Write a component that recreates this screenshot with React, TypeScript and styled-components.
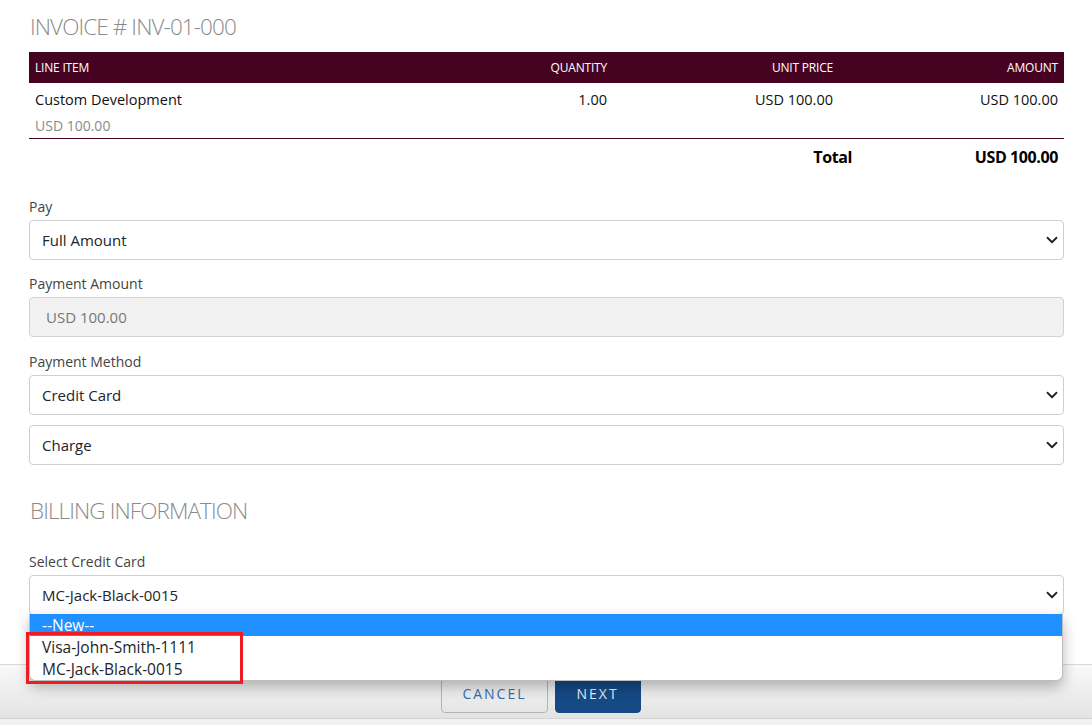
import React from "react";
import styled, { createGlobalStyle } from "styled-components";

const Global = createGlobalStyle`
  html, body { margin: 0; padding: 0; background: #fff; }
  body { font-family: "Open Sans", "Noto Sans", sans-serif; color: #212529; }
  * { box-sizing: border-box; }
`;

const Page = styled.div`
  width: 1092px;
  height: 725px;
  overflow: hidden;
  display: flex;
  flex-direction: column;
  background: #fff;
`;

const Content = styled.div`
  padding: 11px 28px 0 29px;
  display: flex;
  flex-direction: column;
`;

const SectionTitle = styled.h2<{ $top?: number }>`
  margin: ${(p) => p.$top ?? 0}px 0 0 1px;
  font-size: 22.5px;
  font-weight: 300;
  color: #8a8a8a;
  line-height: 32px;
  letter-spacing: -0.9px;
`;

const TableHead = styled.div`
  margin-top: 9px;
  display: grid;
  grid-template-columns: 1fr 226px 226px 225px;
  height: 31px;
  align-items: center;
  background: #450321;
  color: #fff;
  font-size: 12px;
  text-transform: uppercase;
  letter-spacing: -0.2px;
`;

const Cell = styled.div<{ $right?: boolean; $bold?: boolean }>`
  padding: 0 6px;
  text-align: ${(p) => (p.$right ? "right" : "left")};
  font-weight: ${(p) => (p.$bold ? 700 : 400)};
`;

const ItemRow = styled.div`
  display: grid;
  grid-template-columns: 1fr 226px 226px 225px;
  padding-top: 6px;
  height: 56px;
  border-bottom: 1px solid #450321;
  font-size: 14.5px;
  line-height: 22px;
  color: #111;
`;

const ItemName = styled.div`
  display: flex;
  flex-direction: column;
  gap: 4px;
`;

const SubText = styled.span`
  color: #8a8a8a;
  font-size: 14px;
  padding-left: 6px;
`;

const TotalRow = styled.div`
  display: grid;
  grid-template-columns: 1fr 206px;
  padding-top: 7px;
  font-size: 16px;
  color: #000;
  line-height: 22px;
  letter-spacing: -0.4px;
`;

const Group = styled.div<{ $top: number }>`
  margin-top: ${(p) => p.$top}px;
  display: flex;
  flex-direction: column;
`;

const Label = styled.label`
  font-size: 14px;
  line-height: 20px;
  color: #444;
  margin-bottom: 3px;
`;

const FieldWrap = styled.div`
  position: relative;
`;

const SelectBox = styled.div<{ $top?: number }>`
  margin-top: ${(p) => p.$top ?? 0}px;
  height: 40px;
  border: 1px solid #cfcfcf;
  border-radius: 4px;
  background: #fff;
  display: flex;
  align-items: center;
  justify-content: space-between;
  padding: 0 4px 0 12px;
  font-size: 15px;
  color: #212529;
`;

const Disabled = styled.div`
  height: 40px;
  border: 1px solid #d2d2d2;
  border-radius: 4px;
  background: #f2f2f2;
  display: flex;
  align-items: center;
  padding: 0 16px;
  font-size: 15px;
  color: #777;
`;

const Chevron = () => (
  <svg width="14" height="12" viewBox="0 0 16 16" aria-hidden>
    <path d="m2 5 6 6 6-6" fill="none" stroke="#222" strokeWidth="2.4" strokeLinecap="round" strokeLinejoin="round" />
  </svg>
);

const Dropdown = styled.div`
  position: absolute;
  left: 0;
  right: 1px;
  top: 39px;
  background: #fff;
  border: 1px solid #bdbdbd;
  border-top: none;
  border-radius: 0 0 7px 7px;
  box-shadow: 0 6px 14px rgba(0, 0, 0, 0.28);
  overflow: hidden;
  z-index: 5;
`;

const Option = styled.div<{ $active?: boolean }>`
  height: 22px;
  line-height: 22px;
  padding-left: 12px;
  font-size: 15.5px;
  background: ${(p) => (p.$active ? "#1e90ff" : "#fff")};
  color: ${(p) => (p.$active ? "#fff" : "#212529")};
`;

const Highlight = styled.div`
  position: absolute;
  left: -3px;
  top: 57px;
  width: 217px;
  height: 52px;
  border: 3px solid #ec1c24;
  z-index: 6;
  pointer-events: none;
`;

const Footer = styled.div`
  margin-top: 49px;
  height: 55px;
  border-top: 1px solid #d8d8d8;
  border-bottom: 1px solid #d4d4d4;
  background: linear-gradient(#f9f9f9, #e3e3e3);
  display: flex;
  justify-content: center;
  align-items: flex-end;
  gap: 7px;
  padding: 0 10px 5px 0;
`;

const Button = styled.button<{ $primary?: boolean }>`
  height: 40px;
  padding: 0 ${(p) => (p.$primary ? 21 : 20)}px;
  border-radius: 0 0 4px 4px;
  border: 1px solid ${(p) => (p.$primary ? "#164a85" : "#b5b5b5")};
  background: ${(p) => (p.$primary ? "#164a85" : "transparent")};
  color: ${(p) => (p.$primary ? "#e6eef8" : "#2f6db3")};
  font-family: "Open Sans", sans-serif;
  font-size: 14px;
  letter-spacing: 2px;
  text-transform: uppercase;
`;

const Rest = styled.div`
  flex: 1;
  background: #f1f1f1;
`;

export default function App() {
  return (
    <Page>
      <Global />
      <Content>
        <SectionTitle>INVOICE # INV-01-000</SectionTitle>
        <TableHead>
          <Cell>Line Item</Cell>
          <Cell $right>Quantity</Cell>
          <Cell $right>Unit Price</Cell>
          <Cell $right>Amount</Cell>
        </TableHead>
        <ItemRow>
          <ItemName>
            <Cell>Custom Development</Cell>
            <SubText>USD 100.00</SubText>
          </ItemName>
          <Cell $right>1.00</Cell>
          <Cell $right>USD 100.00</Cell>
          <Cell $right>USD 100.00</Cell>
        </ItemRow>
        <TotalRow>
          <Cell $right $bold>Total</Cell>
          <Cell $right $bold>USD 100.00</Cell>
        </TotalRow>

        <Group $top={29}>
          <Label>Pay</Label>
          <SelectBox>
            Full Amount
            <Chevron />
          </SelectBox>
        </Group>
        <Group $top={14}>
          <Label>Payment Amount</Label>
          <Disabled>USD 100.00</Disabled>
        </Group>
        <Group $top={15}>
          <Label>Payment Method</Label>
          <SelectBox>
            Credit Card
            <Chevron />
          </SelectBox>
          <SelectBox $top={10}>
            Charge
            <Chevron />
          </SelectBox>
        </Group>

        <SectionTitle $top={30}>BILLING INFORMATION</SectionTitle>

        <Group $top={25}>
          <Label>Select Credit Card</Label>
          <FieldWrap>
            <SelectBox>
              MC-Jack-Black-0015
              <Chevron />
            </SelectBox>
            <Dropdown>
              <Option $active>--New--</Option>
              <Option>Visa-John-Smith-1111</Option>
              <Option>MC-Jack-Black-0015</Option>
            </Dropdown>
            <Highlight />
          </FieldWrap>
        </Group>
      </Content>
      <Footer>
        <Button>Cancel</Button>
        <Button $primary>Next</Button>
      </Footer>
      <Rest />
    </Page>
  );
}
